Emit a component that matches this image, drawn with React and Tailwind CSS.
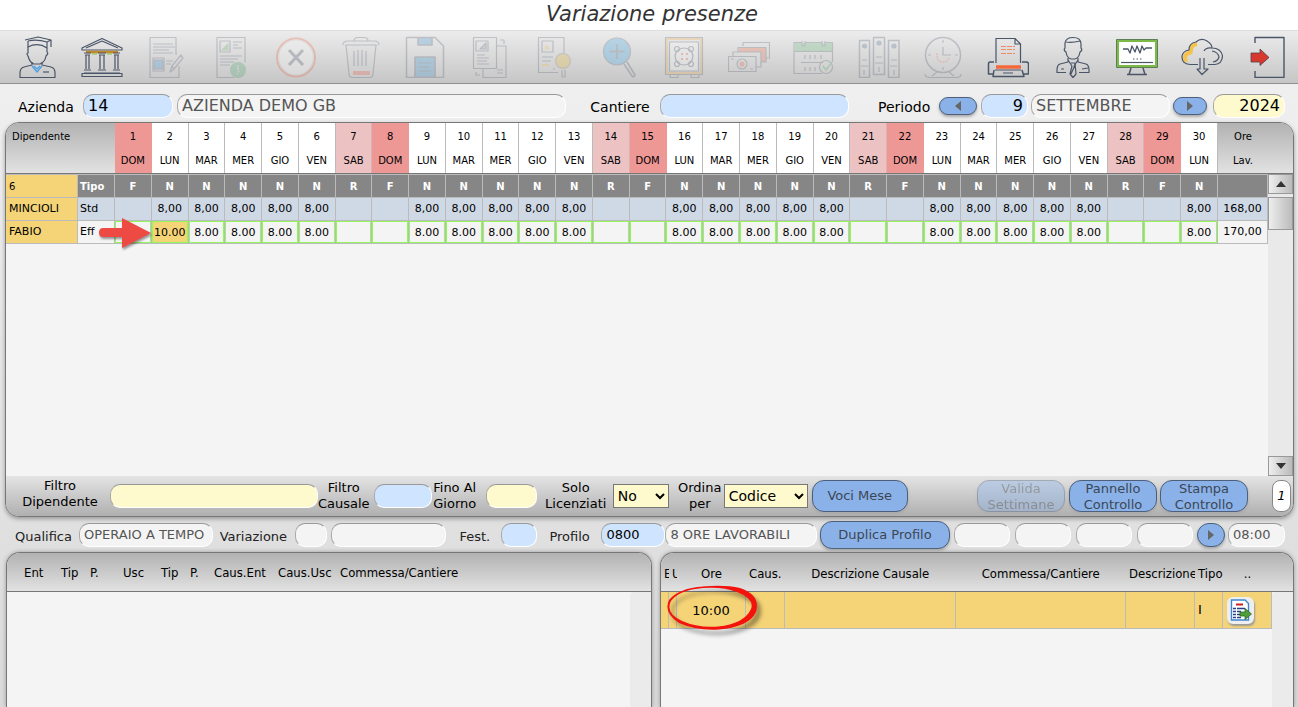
import React, { useState } from 'react';

const INK = '#4a5568';

const DAY_NAMES = ['DOM', 'LUN', 'MAR', 'MER', 'GIO', 'VEN', 'SAB'];

const days = Array.from({ length: 30 }, (_, i) => {
  const name = DAY_NAMES[i % 7];
  const work = name !== 'DOM' && name !== 'SAB';
  return {
    num: i + 1,
    name,
    type: name === 'DOM' ? 'F' : name === 'SAB' ? 'R' : 'N',
    std: work ? '8,00' : '',
    eff: work ? (i === 1 ? '10.00' : '8.00') : '',
  };
});

const headColor = {
  DOM: 'bg-[#ee9896] border-[#ee9896]',
  SAB: 'bg-[#edc2c3] border-[#d9b3b4]',
};

const tools = [
  {
    label: 'Dipendente',
    on: true,
    art: (
      <>
        <path d="M9 4 L22 1 L35 4 L31 6 V12 M35 4 V11 M12 5 V11 Q22 6 31 12 M12 5 Q21 3 31 6" />
        <path d="M12 11 V17 Q10 17 12 20 Q14 27 18 28 H24 Q29 26 30 20 Q33 17 31 16 V12" />
        <path d="M16 26 V29 L8 31 Q4 32 4 37 V41.500 H39 V37 Q39 32 35 31 L26 29 V26" />
        <path d="M16 30 L21 36 L26 30 M18 30 L21 33 L24 30" stroke="#4a9fe0" />
        <path d="M27 36 H33" />
      </>
    ),
  },
  {
    label: 'Azienda',
    on: true,
    art: (
      <>
        <path d="M1 12 L21 2.500 L41 12 V14 H1 Z M5 12 L21 5 L37 12" />
        <path d="M5 16 H37" stroke="#c08a2c" strokeWidth="2.500" />
        <path d="M11 18 H16 M26 18 H31" stroke="#86c03c" />
        <path d="M3 17 H10 M17 17 H25 M32 17 H39 M4 19 H9 M18 19 H24 M33 19 H38 M5 19 V33 M8 19 V33 M19 19 V33 M23 19 V33 M34 19 V33 M37 19 V33" />
        <path d="M3 34 H10 M17 34 H25 M32 34 H39 M3 37 H39 M1 40.500 H41 V37.500 H1 Z" />
      </>
    ),
  },
  {
    label: 'Modifica',
    art: (
      <>
        <path d="M31 19 V1.500 H5 V41.500 H34 V30" />
        <path d="M8 8 H28 M8 11 H30 M8 14 H24 M8 17 H28" />
        <rect x="9" y="24" width="9" height="9" fill="#2b8fd6" />
        <path d="M8 22 H19 V35 H8 Z M21 25 H28 M21 28 H26" />
        <path d="M25 36 L27 30 L36 19 L38 22 L29 33 Z M27 30 L29 33" />
      </>
    ),
  },
  {
    label: 'Documento',
    art: (
      <>
        <path d="M35 26 V1.500 H7 V41.500 H24" />
        <path d="M10 5 H20 V16 H10 Z M23 6 H32 M23 9 H28 M23 12 H32 M10 20 H32 M10 23 H28 M10 26 H24 M10 29 H20" />
        <path d="M12 14 L18 8 V14 Z" fill="#5fae5f" stroke="#5fae5f" />
        <circle cx="28" cy="34" r="7.500" fill="#3fa063" stroke="#3fa063" />
        <path d="M29 30 Q26 31 28 33 Q30 35 27 38" stroke="#d6e8d6" strokeDasharray="2 1" />
      </>
    ),
  },
  {
    label: 'Annulla',
    art: (
      <>
        <circle cx="21" cy="21.500" r="19" stroke="#f0522a" strokeWidth="2" />
        <circle cx="21" cy="21.500" r="17.500" fill="#fff" stroke="#c9c9c9" />
        <path d="M14 14 L28 29 M28 14 L14 29" strokeWidth="3" />
      </>
    ),
  },
  {
    label: 'Elimina',
    art: (
      <>
        <path d="M3 9 Q3 5 8 5 H34 Q39 5 39 9 M14 5 Q14 1.500 18 1.500 H24 Q28 1.500 28 5 M5 9 H37" />
        <path d="M6 9 L9 38 Q9 41.500 13 41.500 H29 Q33 41.500 33 38 L36 9 M14 15 V30 M18 14 V30 M22 14 V30 M26 15 V30" />
        <path d="M13 37 H30" stroke="#f0523c" strokeWidth="4" />
      </>
    ),
  },
  {
    label: 'Salva',
    art: (
      <>
        <path d="M2.500 1.500 H31 L39.500 10 V41.500 H2.500 Z" strokeWidth="1.500" />
        <rect x="14" y="2" width="14" height="7" fill="#2b8fd6" />
        <rect x="11" y="21" width="20" height="20" fill="#2b8fd6" />
        <path d="M15 27 H27 M15 31 H25 M15 35 H27 M14 2 V9 H28 V2 M11 41 V21 H31 V41" />
      </>
    ),
  },
  {
    label: 'Copia',
    art: (
      <>
        <path d="M4.500 1.500 H27.500 V32.500 H4.500 Z M7 5 H19 V15 H7 Z M8 19 H16 M8 22 H20 M8 25 H18 M8 28 H20" />
        <path d="M11 13 L17 7 V13 Z" fill="#8f9aa8" />
        <path d="M28 10 H37 V41.500 H14 V33 M28 37 H34 M28 34 H34 M31 4 H35 V8 M11 39 H7 V36" />
      </>
    ),
  },
  {
    label: 'Anteprima',
    art: (
      <>
        <path d="M30 17 V1.500 H4.500 V36.500 H24 M8 5 H19 V16 H8 Z M8 21 H19 M8 25 H17 M19 33 H21" />
        <path d="M12 13 V10 L15 13 M8 29 H15" stroke="#f0b92c" strokeWidth="2" />
        <circle cx="29" cy="25" r="7.500" fill="#e8b923" stroke="#8f8a70" strokeWidth="1.500" />
        <path d="M28 34 V41 H31 V34" />
      </>
    ),
  },
  {
    label: 'Cerca',
    art: (
      <>
        <circle cx="18" cy="15.500" r="13.500" fill="#2b9fe6" />
        <path d="M18 8 V23 M10.500 15.500 H25.500" strokeWidth="1.800" />
        <path d="M25 28 L33 40 Q35 42 36 39 L28 26" strokeWidth="1.800" />
      </>
    ),
  },
  {
    label: 'Cassaforte',
    art: (
      <>
        <path d="M3.500 2.500 H38.500 V37.500 H3.500 Z" stroke="#edaa3a" strokeWidth="3" />
        <path d="M2.500 1.500 H39.500 V38.500 H2.500 Z M7 39 V41.500 H15 V39 M28 39 V41.500 H36 V39" />
        <path d="M6.500 6 H35.500 V35 H6.500 Z" fill="#fff" />
        <path d="M15 14 Q21 10 27 14 Q33 20 27 27 Q21 31 15 27 Q9 20 15 14 Z" />
        <circle cx="14" cy="13" r="2.500" /><circle cx="28" cy="13" r="2.500" />
        <circle cx="14" cy="28" r="2.500" /><circle cx="28" cy="28" r="2.500" />
        <path d="M18 18 H20 M23 18 H25 M18 23 H20 M23 23 H25" stroke="#f0523c" strokeWidth="2" />
      </>
    ),
  },
  {
    label: 'Pagamenti',
    art: (
      <>
        <path d="M15 10 V6.500 H41.500 V22 H38" />
        <path d="M11 13.500 H35.500 V26" stroke="#f0623c" strokeWidth="5" strokeLinejoin="miter" />
        <path d="M10 16 V11.500 H38 V26 H33 M5 20 V16 H33 V31 H28 M.500 20.500 H28 V35.500 H.500 Z M3 23 H6 M22 33 H25" />
        <circle cx="14" cy="28" r="5" /><circle cx="14" cy="28" r="2" fill="#f0523c" stroke="#f0523c" />
      </>
    ),
  },
  {
    label: 'Calendario',
    art: (
      <>
        <rect x="2" y="7" width="37" height="8" fill="#5fb873" stroke="none" />
        <path d="M29 37.500 H1 V6.500 H9 M12 6.500 H29 M32 6.500 H39.500 V26 M9 5 V10 H12 V5 M29 5 V10 H32 V5 M1 15.500 H39" />
        <path d="M12 19 V23 M17 19 V23 M22 19 V23 M28 19 V23 M12 31 V35 M17 31 V35 M22 31 V35 M8 26.500 H30" />
        <circle cx="33" cy="31" r="6.500" />
        <path d="M30 30 L33 34 L39 26" stroke="#3aa655" strokeWidth="1.500" />
      </>
    ),
  },
  {
    label: 'Archivi',
    art: (
      <>
        <path d="M1.500 4.500 H11.500 V41.500 H1.500 Z M15.500 1.500 H26.500 V38.500 H15.500 Z M30.500 4.500 H41 V41.500 H30.500 Z" strokeWidth="1.500" />
        <path d="M4 24 H9 M3 30 H10 M18 21 H24 M17 27 H25 M33 24 H39 M32 30 H39 M6 34 V39 M21 31 V36 M36 34 V39" />
        <circle cx="6.500" cy="10" r="2" fill="#2b6fb6" /><circle cx="21" cy="7" r="2" fill="#2b6fb6" /><circle cx="36" cy="10" r="2" fill="#2b6fb6" />
      </>
    ),
  },
  {
    label: 'Orologio',
    art: (
      <>
        <circle cx="21" cy="19" r="17.500" strokeWidth="1.500" />
        <path d="M21 4 V7 M21 31 V34 M6 19 H9 M33 19 H36 M21 11 V19 H29" />
        <path d="M15 17 Q14 26 21 26 Q26 26 27 22" stroke="#f0523c" strokeDasharray="2 1" />
        <path d="M3 38 Q3 41.500 8 41.500 H34 Q39 41.500 39 38 M10 40 L15 36 M32 40 L27 36" />
      </>
    ),
  },
  {
    label: 'Stampa',
    on: true,
    art: (
      <>
        <path d="M9 27 V2.500 H28 L33.500 8 V27 M28 2.500 V8 H33" />
        <path d="M14 10.500 H28 M14 13.500 H28 M14 17.500 H28" stroke="#f4876a" strokeDasharray="5 1" />
        <path d="M7 26 H3 Q1.500 26 1.500 28 V38 H7 M35 26 H39 Q41.500 26 41.500 28 V38 H36 M7 34 L6 40.500 H37 L35 34" strokeWidth="1.500" />
        <path d="M9 31 H34" stroke="#f4683c" strokeWidth="3.500" />
        <path d="M8 34 H34 M16 37 H26" />
      </>
    ),
  },
  {
    label: 'Responsabile',
    on: true,
    art: (
      <>
        <path d="M13 7 Q14 1.500 21 1.500 Q29 1.500 29 8 M14 6 Q20 7 28 5 M13 7 V12 Q11 14 14 16 Q15 22 19 23 H23 Q27 22 28 16 Q31 14 29 12 V8" />
        <path d="M16 22 V26 L8 28 Q5 29 5 34 V36.500 H14 M26 22 V26 L34 28 Q37 29 37 34 V36.500 H27 M16 24 L20 30 M26 24 L22 30 M9 33 H12 M30 33 L36 32" />
        <path d="M19 27 H23 L24 38 L21 41.500 L18 38 L20 30 M23 29 L19 38" />
      </>
    ),
  },
  {
    label: 'Monitor',
    on: true,
    art: (
      <>
        <rect x="1.500" y="4.500" width="39" height="26" fill="#fff" stroke="#7cba48" strokeWidth="3" />
        <path d="M.500 3.500 H41.500 V31.500 H.500 Z" strokeWidth=".600" />
        <path d="M7 13 H12 L14 17 L16 10 L19 16 L21 10 L24 17 L26 10 L28 14 L30 12 H36" strokeWidth="1.300" />
        <path d="M17 23 H26" strokeDasharray="1.500 2" />
        <path d="M5 26.500 H37" />
        <path d="M15 32 L13 38.500 H29 L27 32 M11 38.500 H31" strokeWidth="1.500" />
      </>
    ),
  },
  {
    label: 'Scarica',
    on: true,
    art: (
      <>
        <path d="M5 26 Q2 19 8 17 Q10 17 10 14 Q10 9 16 8" stroke="#f5c24a" strokeWidth="4" />
        <path d="M17 28.500 H9 Q.500 28 1 20 Q2 15 8 14 Q8 7 15 6 Q20 1.500 26 5 Q31 8 31 12 Q40 12 41.500 20 Q41 28 34 28.500 H27" />
        <path d="M31 12 Q25 11 23 15 M31 15 Q37 16 38 21 Q37 25 32 26" />
        <path d="M19 22 V33 H16 L21 38.500 L27 33 H23 V22" />
      </>
    ),
  },
  {
    label: 'Esci',
    on: true,
    art: (
      <>
        <path d="M9 7 V1.500 H38 V41.500 H9 V35" strokeWidth="1.400" />
        <path d="M5 17 H14 V13 L23 21.500 L14 29.500 V26 H5 Z" fill="#d8392f" stroke="#54404a" strokeWidth=".800" />
      </>
    ),
  },
];

const tones = {
  blue: 'bg-[#cfe4ff] text-black',
  yellow: 'bg-[#fffacd] text-black',
  gray: 'bg-[#f4f4f4] text-[#555]',
};

function Field({ id, label, tone = 'gray', size = 'text-[13px]', className = '', value = '' }) {
  const [val, setVal] = useState(value);
  return (
    <input
      id={id}
      type="text"
      aria-label={label}
      value={val}
      onChange={(e) => setVal(e.target.value)}
      className={`h-6 min-w-0 rounded-[10px] border border-t-[#999] border-l-[#aaa] border-r-white border-b-white px-1 outline-none ${tones[tone]} ${size} ${className}`}
    />
  );
}

function BlueButton({ children, className = '', ...rest }) {
  return (
    <button
      type="button"
      className={`flex shrink-0 items-center justify-center rounded-xl border border-[#4d5f7a] bg-[#8ab2e9] text-[13px] leading-4 text-[#3c4654] shadow-[0_2px_3px_#aaa] disabled:opacity-40 ${className}`}
      {...rest}
    >
      {children}
    </button>
  );
}

function Arrow({ left }) {
  return (
    <svg width="8" height="10" viewBox="0 0 8 10" fill="#666">
      {left ? <path d="M7 0 V10 L1 5 Z" /> : <path d="M1 0 V10 L7 5 Z" />}
    </svg>
  );
}

function Toolbar() {
  return (
    <div className="flex h-[54px] items-center justify-between border-t border-b border-t-[#ddd] border-b-[#8f8f8f] bg-gradient-to-b from-[#ececec] to-[#c6c6c6] pl-4 pr-2.5">
      {tools.map((t) => (
        <button key={t.label} type="button" aria-label={t.label} disabled={!t.on} className="disabled:opacity-25">
          <svg width="42" height="42" viewBox="0 0 42 42" fill="none" stroke={INK} strokeWidth="1.2" strokeLinejoin="round">
            {t.art}
          </svg>
        </button>
      ))}
    </div>
  );
}

function CompanyBar() {
  return (
    <div className="flex h-[38px] items-center pl-[18px] pr-[13px] pt-1.5 text-sm">
      <label htmlFor="azienda" className="w-[65px] shrink-0 pt-0.5">Azienda</label>
      <Field id="azienda" tone="blue" size="text-base" className="w-[90px]" value="14" />
      <Field label="Ragione sociale" size="text-base" className="ml-1 w-0 grow-[380]" value="AZIENDA DEMO GB" />
      <label htmlFor="cantiere" className="ml-6 w-[70px] shrink-0 pt-0.5">Cantiere</label>
      <Field id="cantiere" tone="blue" size="text-base" className="w-0 grow-[179]" />
      <label htmlFor="periodo" className="ml-[29px] w-[61px] shrink-0 pt-0.5">Periodo</label>
      <BlueButton aria-label="Mese precedente" className="h-[18px] w-[38px]"><Arrow left /></BlueButton>
      <Field id="periodo" tone="blue" size="text-base" className="ml-1 w-[47px] text-right" value="9" />
      <Field label="Mese" size="text-base" className="ml-[3px] w-[139px]" value="SETTEMBRE" />
      <BlueButton aria-label="Mese successivo" className="ml-[3px] h-[18px] w-[34px]"><Arrow /></BlueButton>
      <Field label="Anno" tone="yellow" size="text-base" className="ml-1.5 w-[72px] text-right" value="2024" />
    </div>
  );
}

function Cols() {
  return (
    <colgroup>
      <col className="w-[72px]" />
      <col className="w-[37px]" />
      {days.map((d) => <col key={d.num} />)}
      <col className="w-[50px]" />
    </colgroup>
  );
}

function ScrollBar() {
  return (
    <div className="flex w-[25px] shrink-0 flex-col justify-between bg-[#e9e9e9]" aria-hidden="true">
      <div>
        <div className="flex h-5 items-center justify-center border border-[#999] bg-gradient-to-r from-[#eee] to-[#bbb]">
          <svg width="10" height="6" viewBox="0 0 10 6"><path d="M0 6 L5 0 L10 6 Z" fill="#333" /></svg>
        </div>
        <div className="mt-[3px] h-[33px] border border-[#999] bg-gradient-to-r from-[#eee] to-[#bbb]" />
      </div>
      <div className="flex h-5 items-center justify-center border border-[#999] bg-gradient-to-r from-[#eee] to-[#bbb]">
        <svg width="10" height="6" viewBox="0 0 10 6"><path d="M0 0 L5 6 L10 0 Z" fill="#333" /></svg>
      </div>
    </div>
  );
}

function RedArrow() {
  return (
    <svg className="pointer-events-none absolute left-5 -top-1 z-10 drop-shadow-[1px_2px_1px_rgba(0,0,0,0.4)]" width="54" height="32" viewBox="0 0 54 32">
      <path d="M5 11 H24 V1 L53 16 L24 31 V20 H5 Q1 20 1 15.500 Q1 11 5 11 Z" fill="#ec4a43" />
    </svg>
  );
}

function Presenze() {
  return (
    <div className="ml-[5px] mr-1 overflow-hidden rounded-[14px] border border-[#777] bg-[#f4f4f4] shadow-[0_2px_4px_#999]">
      <div className="border-b border-[#777] bg-gradient-to-b from-[#b2b2b2] to-[#e2e2e2] pr-[25px]">
        <table className="w-full table-fixed border-separate border-spacing-0 text-[10px]">
          <Cols />
          <thead>
            <tr className="h-[50px]">
              <th colSpan={2} className="px-1.5 pt-1.5 text-left align-top font-normal leading-4">Dipendente</th>
              {days.map((d) => (
                <th key={d.num} className={`border-r pt-1.5 align-top font-normal ${headColor[d.name] || 'border-[#bbb] bg-white'}`}>
                  <span className="block leading-4">{d.num}</span>
                  <span className="mt-2 block leading-4">{d.name}</span>
                </th>
              ))}
              <th className="pt-1.5 align-top font-normal">
                <span className="block leading-4">Ore</span>
                <span className="mt-2 block leading-4">Lav.</span>
              </th>
            </tr>
          </thead>
        </table>
      </div>

      <div className="flex h-[302px]">
        <div className="min-w-0 grow">
          <table className="w-full table-fixed border-separate border-spacing-0 border-t border-[#bbb] text-[11px]">
            <Cols />
            <tbody>
              <tr className="h-[23px] bg-[#868686] text-center text-[10px] font-bold text-white">
                <td className="border-r border-b border-[#bbb] bg-[#f5d478] px-[3px] text-left font-normal text-black">6</td>
                <td className="border-r border-b border-[#bbb] px-0.5 text-left">Tipo</td>
                {days.map((d) => <td key={d.num} className="border-r border-b border-[#bbb]">{d.type}</td>)}
                <td className="border-r border-b border-[#bbb]" />
              </tr>
              <tr className="h-[23px] bg-[#cfd9e6] text-center">
                <td className="border-r border-b border-[#bbb] bg-[#f5d478] px-[3px] text-left">MINCIOLI</td>
                <td className="border-r border-b border-[#bbb] px-0.5 text-left">Std</td>
                {days.map((d) => <td key={d.num} className="border-r border-b border-[#bbb]">{d.std}</td>)}
                <td className="border-r border-b border-[#bbb]">168,00</td>
              </tr>
              <tr className="h-[23px] text-center">
                <td className="border-r border-b border-[#bbb] bg-[#f5d478] px-[3px] text-left">FABIO</td>
                <td className="relative border-r border-b border-[#bbb] px-0.5 text-left">
                  Eff
                  <RedArrow />
                </td>
                {days.map((d) => (
                  <td key={d.num} className="border-r border-b border-[#bbb] p-0">
                    <input
                      type="text"
                      aria-label={`Ore effettive giorno ${d.num}`}
                      defaultValue={d.eff}
                      className={`block h-[22px] w-full border border-[#92f75c] text-center outline-none ${d.num === 2 ? 'bg-[#f5d478]' : ''}`}
                    />
                  </td>
                ))}
                <td className="border-r border-b border-[#bbb]">170,00</td>
              </tr>
            </tbody>
          </table>
        </div>
        <ScrollBar />
      </div>

      <FilterBar />
    </div>
  );
}

function FilterBar() {
  const selectClass = 'h-6 shrink-0 border border-[#777] bg-[#fffacd] text-sm';
  return (
    <div className="flex h-10 items-center bg-gradient-to-b from-[#e4e4e4] to-[#b0b0b0] pl-4 pr-0.5 text-center text-[13px] leading-4">
      <label htmlFor="f-dip" className="w-[76px] shrink-0 pb-1">Filtro Dipendente</label>
      <Field id="f-dip" tone="yellow" className="ml-3 w-0 grow-[197]" />
      <label htmlFor="f-caus" className="w-[52px] shrink-0">Filtro Causale</label>
      <Field id="f-caus" tone="blue" className="ml-1 w-[58px]" />
      <label htmlFor="f-giorno" className="w-[46px] shrink-0">Fino Al Giorno</label>
      <Field id="f-giorno" tone="yellow" className="ml-2 w-[51px]" />
      <label htmlFor="f-lic" className="ml-2 w-[62px] shrink-0">Solo Licenziati</label>
      <select id="f-lic" className={`ml-1.5 w-14 ${selectClass}`} defaultValue="No">
        <option>No</option>
        <option>Si</option>
      </select>
      <label htmlFor="f-ord" className="ml-2 w-[46px] shrink-0">Ordina per</label>
      <select id="f-ord" className={`ml-px w-[84px] ${selectClass}`} defaultValue="Codice">
        <option>Codice</option>
        <option>Nome</option>
      </select>
      <BlueButton className="ml-1 h-8 w-24">Voci Mese</BlueButton>
      <div className="grow-[69]" />
      <BlueButton disabled className="h-8 w-[88px] pt-px">Valida Settimane</BlueButton>
      <BlueButton className="ml-1 h-8 w-[88px] pt-px">Pannello Controllo</BlueButton>
      <BlueButton className="ml-[3px] h-8 w-[88px] pt-px">Stampa Controllo</BlueButton>
      <span className="ml-6 flex h-8 w-[19px] shrink-0 items-center justify-center rounded-lg border border-[#888] bg-white italic">1</span>
    </div>
  );
}

function ProfiloBar() {
  return (
    <div className="flex h-[35px] items-center pl-[15px] pr-[13px] text-[13px] text-[#222]">
      <label htmlFor="qualifica" className="w-16 shrink-0 pt-1">Qualifica</label>
      <Field id="qualifica" className="w-0 grow-[124]" value="OPERAIO A TEMPO" />
      <label htmlFor="variazione" className="ml-[7px] w-[75px] shrink-0 pt-1">Variazione</label>
      <Field id="variazione" className="w-8" />
      <Field label="Descrizione variazione" className="ml-1 w-0 grow-[106]" />
      <label htmlFor="fest" className="ml-[13px] w-[42px] shrink-0 pt-1">Fest.</label>
      <Field id="fest" tone="blue" className="w-9" />
      <label htmlFor="profilo" className="ml-3 w-[52px] shrink-0 pt-1">Profilo</label>
      <Field id="profilo" tone="blue" className="w-16" value="0800" />
      <Field label="Descrizione profilo" className="w-0 grow-[142]" value="8 ORE LAVORABILI" />
      <BlueButton className="ml-[3px] h-7 w-[130px]">Duplica Profilo</BlueButton>
      <Field label="Entrata 1" className="ml-1 w-14" />
      <Field label="Uscita 1" className="ml-[5px] w-14" />
      <Field label="Entrata 2" className="ml-[5px] w-14" />
      <Field label="Uscita 2" className="ml-[5px] w-14" />
      <BlueButton aria-label="Profilo successivo" className="ml-1 h-6 w-7"><Arrow /></BlueButton>
      <Field label="Ore profilo" className="ml-[3px] w-[57px]" value="08:00" />
    </div>
  );
}

function Timbrature() {
  return (
    <div className="flex min-w-0 flex-col overflow-hidden rounded-t-[14px] border border-b-0 border-[#777] bg-[#f4f4f4] shadow-[0_0_4px_#999]">
      <div className="border-b border-[#777] bg-gradient-to-b from-[#b2b2b2] to-[#e2e2e2] pl-[17px] font-['DejaVu_Sans_Condensed']">
        <table className="w-full table-fixed text-left text-[13px]">
          <colgroup>
            <col className="w-[37px]" />
            <col className="w-[29px]" />
            <col className="w-[33px]" />
            <col className="w-[38px]" />
            <col className="w-[29px]" />
            <col className="w-6" />
            <col className="w-16" />
            <col className="w-[62px]" />
            <col />
          </colgroup>
          <thead>
            <tr className="h-[38px]">
              {['Ent', 'Tip', 'P.', 'Usc', 'Tip', 'P.', 'Caus.Ent', 'Caus.Usc', 'Commessa/Cantiere'].map((h, i) => (
                <th key={i} className="p-0 pt-0.5 font-normal">{h}</th>
              ))}
            </tr>
          </thead>
        </table>
      </div>
      <div className="ml-auto w-[21px] grow rounded-tl bg-[#ebebeb]" />
    </div>
  );
}

function RedCircle() {
  return (
    <svg className="pointer-events-none absolute -left-3 -top-[7px] z-10 drop-shadow-[4px_5px_2px_rgba(0,0,0,0.4)]" width="94" height="48" viewBox="0 0 94 48">
      <path
        d="M38 1.500 Q14 3 4 15 Q-2 28 14 38 Q32 46 54 44.500 Q84 42 91 27 Q96 10 75 3 Q60 -.500 37 1.500 L38 3 Q58 1.500 72 7 Q90 14 86 24 Q79 39 53 41.500 Q33 43 17 36 Q0 28 6 16 Q14 5 38 3 Z"
        fill="#f4130c"
      />
    </svg>
  );
}

function ExportIcon() {
  return (
    <svg width="22" height="22" viewBox="0 0 22 22" fill="none">
      <path d="M1.500 1 H15 L18.500 4.500 V21 H1.500 Z" fill="#fff" stroke="#3d86cf" strokeWidth="1.400" />
      <path d="M6 5.500 H13" stroke="#c8231c" strokeWidth="2" />
      <path d="M3 9.500 H6 M7 9.500 H15 M3 12.500 H6 M7 12.500 H11 M3 15.500 H6 M7 15.500 H11 M3 18.500 H6 M7 18.500 H11" stroke="#27408b" strokeWidth="1.300" />
      <path d="M10 13 H15 V9.500 L21.500 15 L15 20.500 V17 H10 Z" fill="#4f9e3c" stroke="#2c6b22" strokeWidth=".800" />
    </svg>
  );
}

function Causali() {
  const th = 'overflow-hidden whitespace-nowrap p-0 pt-0.5 font-normal';
  const td = 'border-r border-b border-[#bbb] p-0';
  return (
    <div className="flex min-w-0 flex-col overflow-hidden rounded-t-[14px] border border-b-0 border-[#777] bg-[#f4f4f4] shadow-[0_0_4px_#999]">
      <div className="grid grow grid-cols-[minmax(0,1fr)_21px] grid-rows-[39px_1fr]">
        <div className="col-span-2 col-start-1 row-start-1 border-b border-[#777] bg-gradient-to-b from-[#b2b2b2] to-[#e2e2e2]" />
        <div className="col-start-1 row-span-2 row-start-1">
          <table className="w-full table-fixed border-separate border-spacing-0 text-[13px]">
            <colgroup>
              <col className="w-2" />
              <col className="w-2" />
              <col className="w-[69px]" />
              <col className="w-[39px]" />
              <col />
              <col />
              <col className="w-[69px]" />
              <col className="w-7" />
              <col className="w-[49px]" />
            </colgroup>
            <thead className="font-['DejaVu_Sans_Condensed']">
              <tr className="h-[39px]">
                <th className={`${th} pl-[3px] text-left`}>E</th>
                <th className={`${th} pl-[3px] text-left`}>U</th>
                <th className={th}>Ore</th>
                <th className={`${th} pl-[3px] text-left`}>Caus.</th>
                <th className={th}>Descrizione Causale</th>
                <th className={th}>Commessa/Cantiere</th>
                <th className={`${th} pl-[3px] text-left`}>Descrizione</th>
                <th className={`${th} pl-[3px] text-left`}>Tipo</th>
                <th className={th}>..</th>
              </tr>
            </thead>
            <tbody>
              <tr className="h-[37px] bg-[#f5d478]">
                <td className={td} />
                <td className={td} />
                <td className={`relative pt-px text-center ${td}`}>
                  10:00
                  <RedCircle />
                </td>
                <td className={td} />
                <td className={td} />
                <td className={td} />
                <td className={td} />
                <td className={`${td} pl-[3px]`}>I</td>
                <td className={`${td} pl-1`}>
                  <button type="button" aria-label="Apri dettaglio" className="flex h-[27px] w-[27px] items-center justify-center rounded-md bg-[#eee] shadow-[1px_2px_2px_#999]">
                    <ExportIcon />
                  </button>
                </td>
              </tr>
            </tbody>
          </table>
        </div>
        <div className="col-start-2 row-start-2 rounded-tl bg-[#ebebeb]" />
      </div>
    </div>
  );
}

export default function App() {
  return (
    <div className="flex min-h-screen flex-col bg-gradient-to-b from-[#f2f2f2] to-[#dadada] font-['DejaVu_Sans',sans-serif] text-black">
      <h1 className="h-[30px] bg-white pl-1.5 text-center text-[21px] leading-7 italic text-[#333]">Variazione presenze</h1>
      <Toolbar />
      <CompanyBar />
      <Presenze />
      <ProfiloBar />
      <div className="ml-1.5 mr-1 grid grow grid-cols-[646fr_634fr] gap-2">
        <Timbrature />
        <Causali />
      </div>
    </div>
  );
}
